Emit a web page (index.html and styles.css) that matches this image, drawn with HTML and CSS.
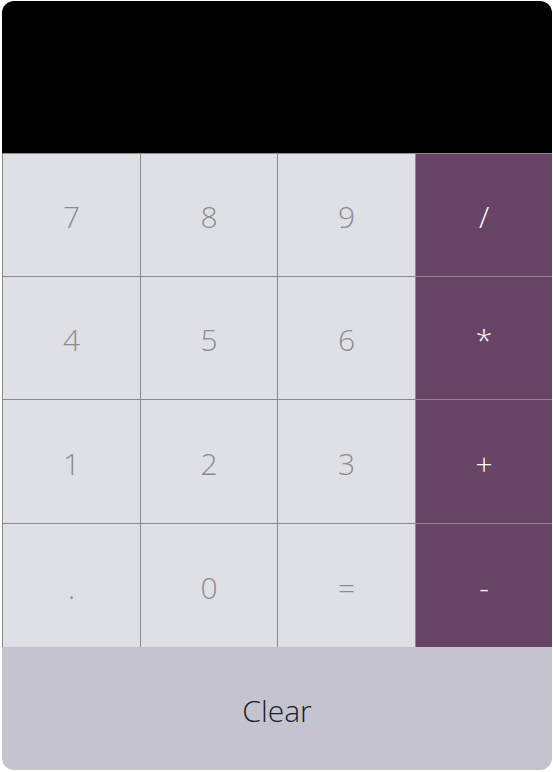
FILE: index.html
```html
<!DOCTYPE html>
<html>
<head>
<meta charset="utf-8">
<link rel="stylesheet" href="styles.css">
</head>
<body>
<div class="calc">
  <div class="display"></div>
  <div class="keys">
    <button class="key">7</button>
    <button class="key">8</button>
    <button class="key">9</button>
    <button class="key op">/</button>
    <button class="key">4</button>
    <button class="key">5</button>
    <button class="key">6</button>
    <button class="key op">*</button>
    <button class="key">1</button>
    <button class="key">2</button>
    <button class="key">3</button>
    <button class="key op">+</button>
    <button class="key">.</button>
    <button class="key">0</button>
    <button class="key">=</button>
    <button class="key op">-</button>
  </div>
  <button class="clear">Clear</button>
</div>
</body>
</html>
```
FILE: styles.css
```css
html, body {
  margin: 0;
  padding: 0;
  background: #ffffff;
}
body {
  padding: 1px 0 0 2px;
  font-family: "Open Sans", "Segoe UI", sans-serif;
}
.calc {
  width: 550px;
  border-radius: 12px;
  overflow: hidden;
  display: flex;
  flex-direction: column;
}
.display {
  height: 152px;
  background: #000000;
}
.keys {
  display: grid;
  grid-template-columns: 138px 137px 138px 137px;
  grid-template-rows: 123px 123px 124px 124px;
}
.key {
  margin: 0;
  padding: 0 0 0 0;
  border: none;
  border-top: 1px solid #8a8a8a;
  border-left: 1px solid #8a8a8a;
  background: #dfe0e5;
  color: #8c8c8c;
  font-family: "Open Sans", "Segoe UI", sans-serif;
  font-weight: 300;
  font-size: 30px;
  line-height: 1;
  display: flex;
  align-items: center;
  justify-content: center;
  padding-top: 4px;
}
.key.op {
  background: #674465;
  color: #ffffff;
}
.clear {
  margin: 0;
  border: none;
  height: 123px;
  background: #c5c3ce;
  color: #1a1a2a;
  font-family: "Open Sans", "Segoe UI", sans-serif;
  font-weight: 300;
  font-size: 30px;
  padding-top: 4px;
}
```
